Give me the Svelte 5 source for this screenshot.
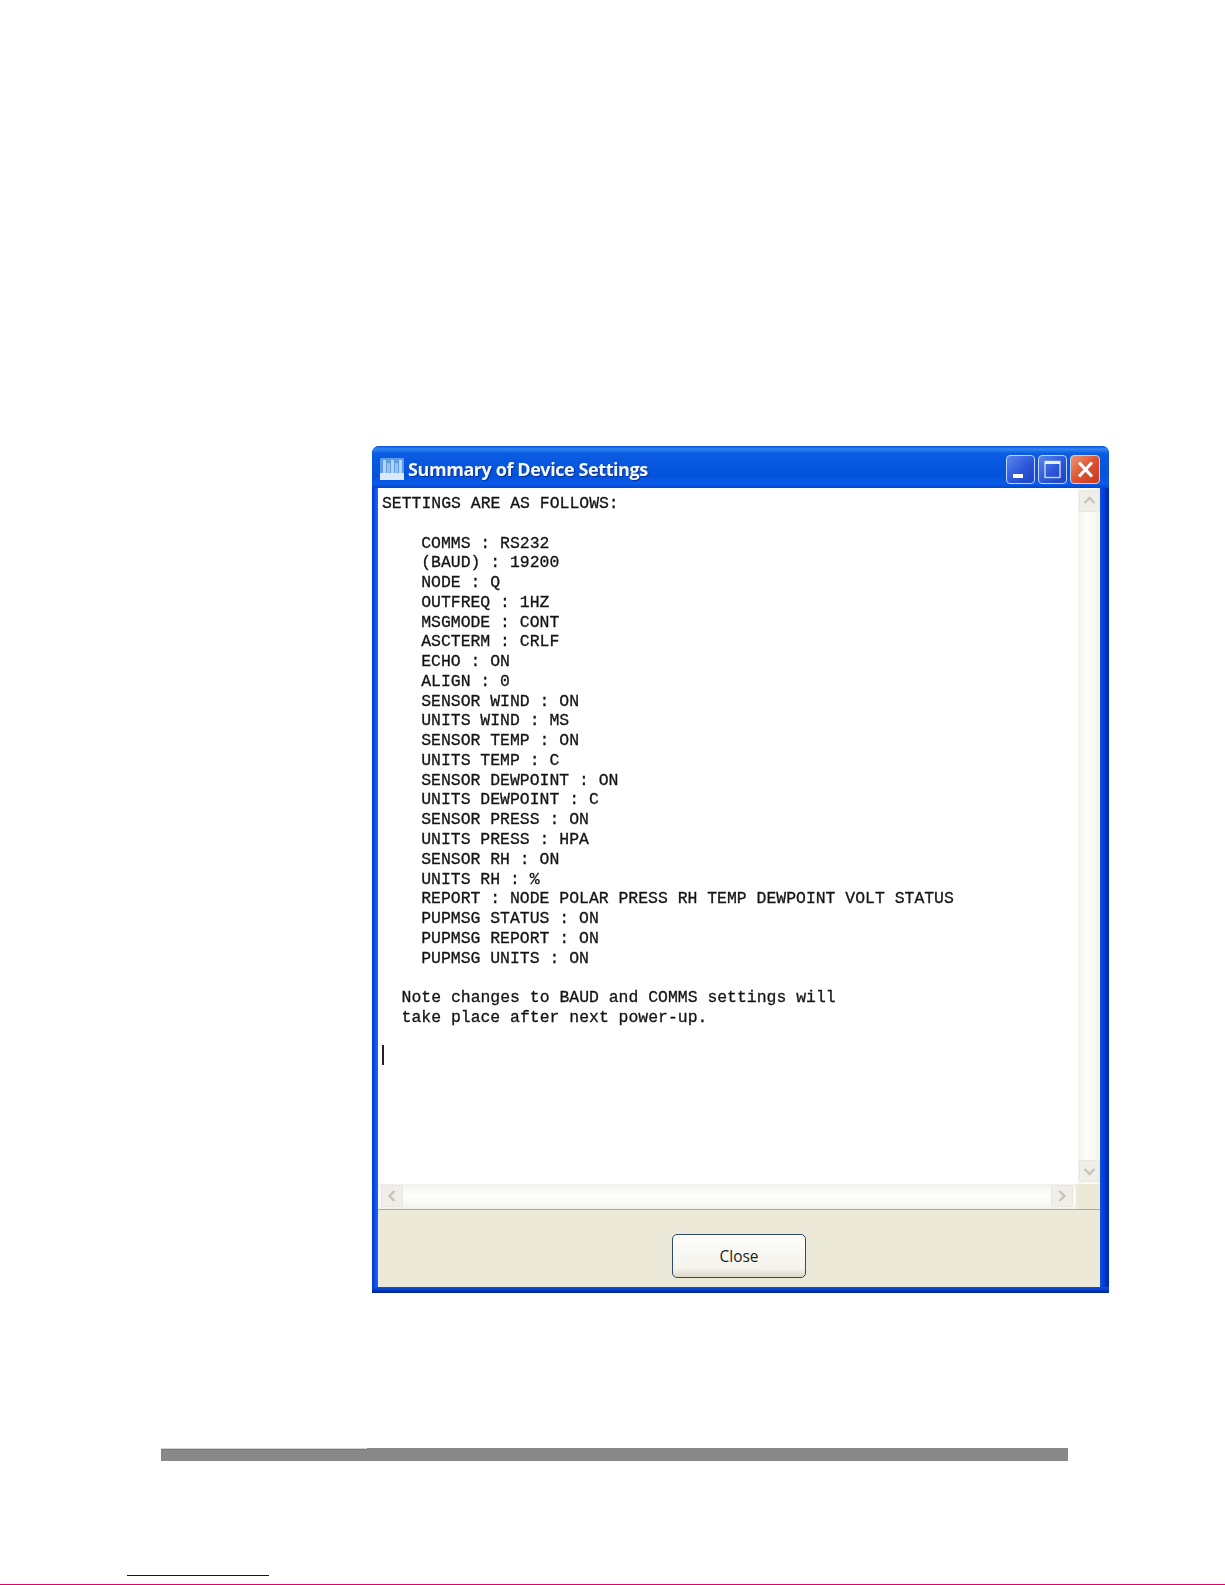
<script>
  const settings = [
    'COMMS : RS232',
    '(BAUD) : 19200',
    'NODE : Q',
    'OUTFREQ : 1HZ',
    'MSGMODE : CONT',
    'ASCTERM : CRLF',
    'ECHO : ON',
    'ALIGN : 0',
    'SENSOR WIND : ON',
    'UNITS WIND : MS',
    'SENSOR TEMP : ON',
    'UNITS TEMP : C',
    'SENSOR DEWPOINT : ON',
    'UNITS DEWPOINT : C',
    'SENSOR PRESS : ON',
    'UNITS PRESS : HPA',
    'SENSOR RH : ON',
    'UNITS RH : %',
    'REPORT : NODE POLAR PRESS RH TEMP DEWPOINT VOLT STATUS',
    'PUPMSG STATUS : ON',
    'PUPMSG REPORT : ON',
    'PUPMSG UNITS : ON'
  ];
</script>

<div class="page">
  <div class="window">
    <div class="titlebar">
      <svg class="app-icon" width="24" height="22" viewBox="0 0 24 22">
        <rect x="0" y="0" width="24" height="22" rx="1" fill="#5f9ce6" />
        <rect x="0" y="15" width="24" height="7" fill="#dbe8f8" />
        <rect x="3" y="2" width="3" height="13" fill="#b9d3f2" />
        <rect x="7" y="5" width="3" height="10" fill="#9cc0ec" />
        <rect x="11" y="2" width="3" height="13" fill="#b9d3f2" />
        <rect x="15" y="5" width="3" height="10" fill="#9cc0ec" />
        <rect x="19" y="2" width="3" height="13" fill="#b9d3f2" />
      </svg>
      <span class="title">Summary of Device Settings</span>
      <div class="controls">
        <div class="ctl">
          <svg width="29" height="29" viewBox="0 0 29 29"><rect x="7" y="19" width="10" height="4" fill="#fff" /></svg>
        </div>
        <div class="ctl">
          <svg width="29" height="29" viewBox="0 0 29 29"><rect x="7" y="6.5" width="15" height="16" fill="none" stroke="#c9d8fa" stroke-width="1.4" /><rect x="7" y="6" width="15" height="3" fill="#e8eefc" /></svg>
        </div>
        <div class="ctl close">
          <svg width="29" height="29" viewBox="0 0 29 29"><path d="M8 7.5 L21 21.5 M21 7.5 L8 21.5" stroke="#fff" stroke-width="3.2" fill="none" /></svg>
        </div>
      </div>
    </div>

    <div class="client">
      <div class="text-row">
        <div class="text">
          <div class="line">SETTINGS ARE AS FOLLOWS:</div>
          <div class="line">&nbsp;</div>
          {#each settings as s}
            <div class="line indent2">{s}</div>
          {/each}
          <div class="line">&nbsp;</div>
          <div class="line indent1">Note changes to BAUD and COMMS settings will</div>
          <div class="line indent1">take place after next power-up.</div>
          <div class="line">&nbsp;</div>
          <div class="line"><span class="caret"></span></div>
        </div>
        <div class="vscroll">
          <div class="sb-btn">
            <svg width="21" height="22" viewBox="0 0 21 22"><path d="M5.5 13 L10.5 8 L15.5 13" fill="none" stroke="#c3c5bd" stroke-width="2.4" /></svg>
          </div>
          <div class="sb-btn">
            <svg width="21" height="22" viewBox="0 0 21 22"><path d="M5.5 9 L10.5 14 L15.5 9" fill="none" stroke="#c3c5bd" stroke-width="2.4" /></svg>
          </div>
        </div>
      </div>
      <div class="hscroll">
        <div class="hbar">
          <div class="sb-btn wide">
            <svg width="22" height="22" viewBox="0 0 22 22"><path d="M13.5 6 L8.5 11 L13.5 16" fill="none" stroke="#c3c5bd" stroke-width="2.4" /></svg>
          </div>
          <div class="sb-btn wide">
            <svg width="22" height="22" viewBox="0 0 22 22"><path d="M8.5 6 L13.5 11 L8.5 16" fill="none" stroke="#c3c5bd" stroke-width="2.4" /></svg>
          </div>
        </div>
        <div class="corner"></div>
      </div>
      <div class="panel">
        <button class="close-btn">Close</button>
      </div>
    </div>
  </div>

  <div class="rule"><div class="rule-edge"></div></div>
  <div class="link-line"></div>
  <div class="edge"></div>
</div>

<style>
  :global(body) {
    margin: 0;
    background: #fff;
  }
  .page {
    height: 1585px;
    padding-top: 446px;
    box-sizing: border-box;
    overflow: hidden;
  }
  .window {
    margin-left: 372px;
    width: 737px;
    height: 847px;
    box-sizing: border-box;
    padding: 0 9px 6px 6px;
    border-radius: 7px 7px 0 0;
    background:
      linear-gradient(180deg, #0a52e2, #02249c) bottom / 100% 6px no-repeat,
      linear-gradient(90deg, #0030d8 0, #1a62ee 5px, #0a50e4 728px, #0024b0 737px);
    display: flex;
    flex-direction: column;
  }
  .titlebar {
    height: 42px;
    margin: 0 -9px 0 -6px;
    padding: 4px 9px 0 8px;
    box-sizing: border-box;
    border-radius: 7px 7px 0 0;
    background: linear-gradient(180deg, #0a50d8 0, #2f86f2 7%, #0a5ce2 18%, #0452dc 70%, #0a5cea 90%, #0444cc 100%);
    display: flex;
    align-items: center;
  }
  .app-icon {
    flex: none;
    margin-right: 4px;
  }
  .title {
    font-family: "Open Sans", "Liberation Sans", sans-serif;
    font-weight: 700;
    font-size: 18px;
    color: #f4f8ff;
    text-shadow: 1px 1px 1px #0a2f90;
    white-space: nowrap;
    letter-spacing: -0.42px;
    filter: blur(0.4px);
  }
  .controls {
    margin-left: auto;
    display: flex;
    gap: 3px;
    filter: blur(0.3px);
  }
  .ctl {
    width: 29px;
    height: 29px;
    box-sizing: border-box;
    border: 1px solid #c4d4f6;
    border-radius: 4px;
    background: linear-gradient(135deg, #5a86ee, #2b56d8 55%, #1c41c4);
    display: flex;
    align-items: center;
    justify-content: center;
  }
  .ctl svg {
    flex: none;
  }
  .ctl.close {
    width: 30px;
    background: linear-gradient(135deg, #ee9678, #dc5232 50%, #c83c1c);
  }
  .client {
    flex: 1;
    display: flex;
    flex-direction: column;
    min-height: 0;
    background: #fff;
  }
  .text-row {
    flex: 1;
    display: flex;
    min-height: 0;
  }
  .text {
    flex: 1;
    padding: 6px 0 0 4px;
    overflow: hidden;
  }
  .line {
    font-family: "Liberation Mono", "Courier New", monospace;
    font-size: 16.44px;
    line-height: 19.78px;
    height: 19.78px;
    color: #141414;
    white-space: pre;
    -webkit-text-stroke: 0.3px #141414;
    filter: blur(0.3px);
  }
  .indent1 {
    padding-left: 19.6px;
  }
  .indent2 {
    padding-left: 39.2px;
  }
  .caret {
    display: inline-block;
    width: 2px;
    height: 20px;
    background: #222;
    vertical-align: top;
    margin-top: -2px;
  }
  .vscroll {
    width: 22px;
    flex: none;
    box-sizing: border-box;
    padding: 2px 1px;
    background: linear-gradient(90deg, #f3f3ee, #fdfdfb 40%, #f3f3ed);
    display: flex;
    flex-direction: column;
    justify-content: space-between;
  }
  .sb-btn {
    width: 21px;
    height: 22px;
    flex: none;
    box-sizing: border-box;
    border: 1px solid #e8e8e0;
    border-radius: 2px;
    background: #efeee8;
  }
  .sb-btn svg {
    display: block;
    margin: -1px;
  }
  .sb-btn.wide {
    width: 22px;
  }
  .hscroll {
    height: 26px;
    flex: none;
    display: flex;
    border-bottom: 1px solid #aaa99e;
    box-sizing: border-box;
  }
  .hbar {
    flex: 1;
    box-sizing: border-box;
    padding: 1px 3px;
    background: linear-gradient(180deg, #f2f2ec, #fefefc 50%, #f3f3ee);
    display: flex;
    justify-content: space-between;
  }
  .corner {
    width: 24px;
    background: #ece9d8;
  }
  .panel {
    height: 77px;
    flex: none;
    background: #ece9d8;
    display: flex;
    justify-content: center;
    padding-top: 24px;
    box-sizing: border-box;
  }
  .close-btn {
    width: 134px;
    height: 44px;
    box-sizing: border-box;
    border: 1.5px solid #2f4a6e;
    border-radius: 5px;
    background: linear-gradient(180deg, #fdfdfb, #f4f3ec 80%, #dcd8c8);
    font-family: "Open Sans", "Liberation Sans", sans-serif;
    font-size: 15.5px;
    color: #222;
    padding: 0;
  }
  .rule {
    margin: 155px 0 0 161px;
    width: 907px;
    height: 13px;
    background: #888;
  }
  .rule-edge {
    width: 206px;
    height: 1px;
    background: #d4d4d4;
    border-bottom: 1px solid #777;
  }
  .link-line {
    margin: 114px 0 0 127px;
    width: 142px;
    height: 1px;
    background: #0000cc;
  }
  .edge {
    margin-top: 8px;
    height: 1px;
    background: #e0006a;
  }
</style>
